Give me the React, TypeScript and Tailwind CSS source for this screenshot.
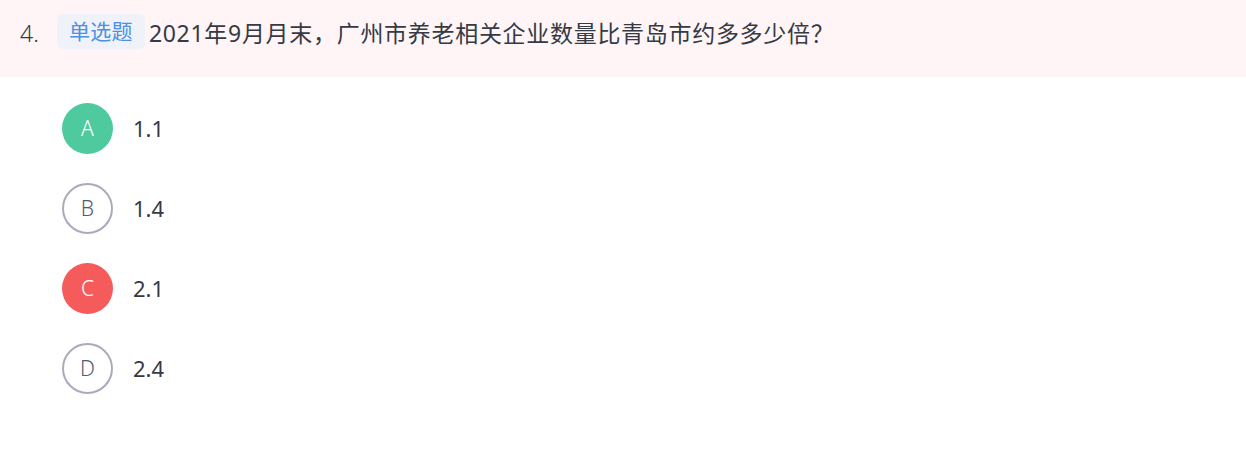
import React from 'react'

type Option = { key: string; text: string; state: 'correct' | 'wrong' | 'none' }

const options: Option[] = [
  { key: 'A', text: '1.1', state: 'correct' },
  { key: 'B', text: '1.4', state: 'none' },
  { key: 'C', text: '2.1', state: 'wrong' },
  { key: 'D', text: '2.4', state: 'none' },
]

const circleClass: Record<Option['state'], string> = {
  correct: 'bg-[#4fc99e] text-white',
  wrong: 'bg-[#f55b5b] text-white',
  none: 'border-2 border-[#a7abbd] text-[#535a70] bg-white',
}

export default function App() {
  return (
    <div
      className="w-[1246px] h-[472px] bg-white text-[#353a45]"
      style={{ fontFamily: '"Noto Sans", "Noto Sans CJK SC", sans-serif' }}
    >
      {/* Question header */}
      <div className="h-[77px] bg-[#fff5f6] flex items-start pl-[20px] pt-[14px]">
        <span className="text-[23px] leading-[35px] h-[35px] w-[37px] font-light mt-[2px]">4.</span>
        <span className="h-[35px] px-[12px] rounded-md bg-[#eff2f9] text-[#4d8fe2] text-[21px] leading-[35px] tracking-[0.3px]">
          单选题
        </span>
        <span className="ml-[4px] text-[23px] tracking-[0.7px] leading-[35px] mt-[2px]">
          2021年9月月末，广州市养老相关企业数量比青岛市约多多少倍？
        </span>
      </div>

      {/* Options */}
      <div className="pl-[62px] pt-[26px] flex flex-col gap-[29px]">
        {options.map((o) => (
          <div key={o.key} className="flex items-center h-[51px]">
            <div
              className={`w-[51px] h-[51px] rounded-full flex items-center justify-center text-[21px] font-light ${circleClass[o.state]}`}
            >
              {o.key}
            </div>
            <span className="ml-[20px] text-[22px] text-[#353a45]">{o.text}</span>
          </div>
        ))}
      </div>
    </div>
  )
}
